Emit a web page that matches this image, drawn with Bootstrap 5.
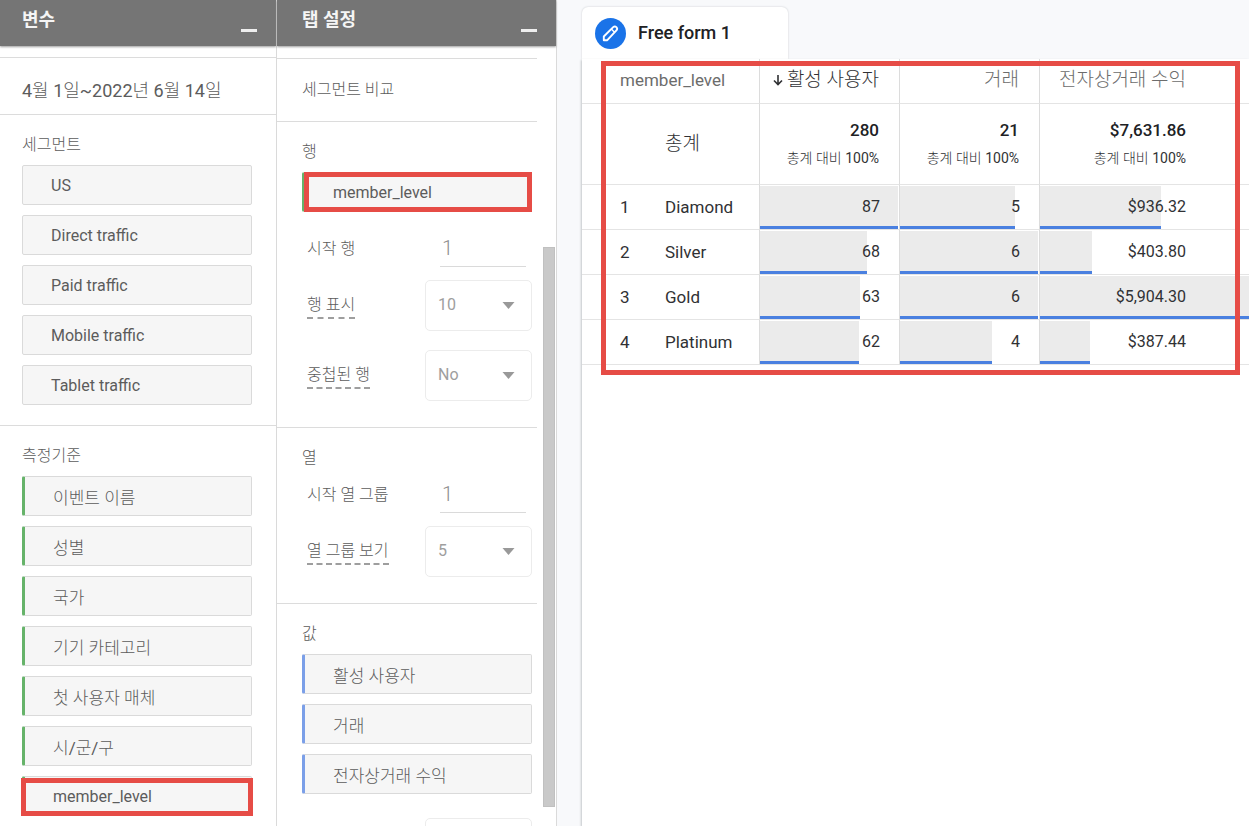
<!DOCTYPE html>
<html lang="ko">
<head>
<meta charset="utf-8">
<meta name="viewport" content="width=device-width, initial-scale=1">
<title>Free form 1</title>
<link href="https://cdn.jsdelivr.net/npm/bootstrap@5.3.0/dist/css/bootstrap.min.css" rel="stylesheet">
<style>
  body { font-family: Roboto, "Noto Sans CJK KR Light", "Noto Sans CJK KR", sans-serif; font-size: 16px; line-height: 20px; color: #5c5c5c; background: #f8f9fb; }
  .side { width: 277px; border-right: 1px solid #dadada; }
  .side-tabs { width: 280px; }
  .side-head { height: 46px; padding: 10px 19px 0 22px; background: #757575; color: #f5f5f5; box-shadow: 0 1px 2px #9e9e9e; }
  .side-head h2 { font-family: Roboto, "Noto Sans CJK KR", sans-serif; font-size: 18px; font-weight: 700; line-height: 20px; }
  .side-tabs .side-head { padding-left: 25px; }
  .collapse-btn { width: 16px; height: 3px; margin-top: 19px; background: #eee; }
  .date-row { height: 58px; margin-top: 11px; padding: 10px 0 0 22px; border: solid #dcdcdc; border-width: 1px 0; font-size: 18px; }
  .group { padding: 20px 24px 20px 22px; }
  .group + .group { border-top: 1px solid #dcdcdc; }
  .group-title { font-size: 16px; font-weight: 400; line-height: 20px; margin-bottom: 10px; }
  .group-tight .group-title { margin-bottom: 8px; }
  .chips { display: grid; gap: 10px; }
  .chip { position: relative; height: 40px; padding: 2px 28px 0; border: 1px solid #dadada; border-radius: 2px; background: #f6f6f6; color: #5c5c5c; text-align: left; }
  .ko { font-size: 17px; padding-top: 4px; }
  .chip-dim { border-left: 3px solid #66b36a; }
  .chip-metric { border-left: 3px solid #7b9fe8; }
  .marked::after, .table-mark { content: ""; position: absolute; border: 5px solid #e64c46; pointer-events: none; }
  .marked::after { inset: 1px -2px -1px -4px; }
  .side-tabs .marked { margin-bottom: 18px; }
  .side-tabs .marked::after { inset: -1px -1px -1px -1px; }
  .tab-body { width: 260px; }
  .tab-body .group { padding: 20px 5px 26px 25px; }
  .compare { height: 64px; margin-top: 12px; padding-left: 25px; border: solid #dcdcdc; border-width: 1px 0; }
  .field { padding-left: 5px; }
  .field + .field + .field { margin-top: 19px; }
  .start-field { height: 37px; margin-bottom: 13px; }
  .start-input { width: 86px; margin-right: 6px; padding: 0 2px; border: 0; border-bottom: 1px solid #dadada; border-radius: 0; font-size: 20px; font-weight: 300; color: #8e8e8e; background: transparent; }
  .hint { border-bottom: 2px dashed #9e9e9e; line-height: 24px; }
  .pick { width: 107px; height: 51px; padding: 0 12px 2px; border: 1px solid #ececec; border-radius: 5px; color: #9e9e9e; font-size: 16px; background-color: #fff;
    background-image: url("data:image/svg+xml,%3Csvg xmlns='http://www.w3.org/2000/svg' viewBox='0 0 12 7'%3E%3Cpath d='M0 0h12L6 7z' fill='%23999'/%3E%3C/svg%3E"); background-size: 13px 7px; background-position: right 16px center; }
  .thumb { width: 12px; height: 560px; margin: 201px 0 0 6px; background: #c9c9c9; border: 1px solid #c0c0c0; }
  .report { margin-left: 25px; padding-top: 7px; min-width: 0; }
  .report-tab { width: 206px; height: 52px; padding-left: 13px; gap: 12px; background: #fff; border-radius: 6px 6px 0 0; box-shadow: 0 0 2px #c4c7ca; color: #202124; font-size: 18px; font-weight: 500; }
  .sheet { background: #fff; box-shadow: -1px 1px 2px #c4c7ca; }
  .grid-table { width: 1223px; table-layout: fixed; border-collapse: separate; border-spacing: 0; font-size: 17px; color: #303134; }
  .grid-table th, .grid-table td { padding: 0; border-bottom: 1px solid #e4e4e4; vertical-align: middle; font-weight: 400; }
  .grid-table .edge { border-right: 1px solid #dcdcdc; }
  .grid-table thead th { height: 45px; color: #6c6c6c; padding-bottom: 2px; }
  .grid-table thead .sorted { color: #303134; }
  .grid-table .lead-cell { padding-left: 38px; }
  .grid-table .head-ko { font-size: 19px; }
  .grid-table .num { padding-right: 20px; text-align: right; }
  .bar-cell .num { padding-right: 19px; }
  .bar-cell { font-size: 16px; }
  .money { width: 146px; text-align: right; }
  .total-row td, .total-row th { height: 81px; }
  .total-num { font-weight: 500; line-height: 28px; color: #202124; }
  .total-sub { font-size: 14px; line-height: 28px; }
  .bar-cell { display: grid; height: 44px; align-items: center; }
  .bar-cell > * { grid-area: 1 / 1; }
  .bar { height: 43px; align-self: end; background: #ebebeb; border-bottom: 3px solid #4a80e0; }
  .table-mark { inset: 2px 9px -10px 19px; }
</style>
</head>
<body>
<div class="d-flex vh-100 overflow-hidden">

  <aside class="side bg-white flex-shrink-0">
    <header class="side-head d-flex justify-content-between">
      <h2 class="m-0">변수</h2>
      <button type="button" class="collapse-btn border-0 p-0" aria-label="접기"></button>
    </header>
    <div class="date-row d-flex align-items-center">4월 1일~2022년 6월 14일</div>
    <section class="group">
      <h3 class="group-title">세그먼트</h3>
      <div class="chips">
        <button type="button" class="chip">US</button>
        <button type="button" class="chip">Direct traffic</button>
        <button type="button" class="chip">Paid traffic</button>
        <button type="button" class="chip">Mobile traffic</button>
        <button type="button" class="chip">Tablet traffic</button>
      </div>
    </section>
    <section class="group">
      <h3 class="group-title">측정기준</h3>
      <div class="chips">
        <button type="button" class="chip chip-dim ko">이벤트 이름</button>
        <button type="button" class="chip chip-dim ko">성별</button>
        <button type="button" class="chip chip-dim ko">국가</button>
        <button type="button" class="chip chip-dim ko">기기 카테고리</button>
        <button type="button" class="chip chip-dim ko">첫 사용자 매체</button>
        <button type="button" class="chip chip-dim ko">시/군/구</button>
        <button type="button" class="chip chip-dim marked">member_level</button>
      </div>
    </section>
  </aside>

  <aside class="side side-tabs bg-white flex-shrink-0">
    <header class="side-head d-flex justify-content-between">
      <h2 class="m-0">탭 설정</h2>
      <button type="button" class="collapse-btn border-0 p-0" aria-label="접기"></button>
    </header>
    <div class="d-flex">
      <div class="tab-body flex-shrink-0">
        <div class="compare d-flex align-items-center">세그먼트 비교</div>
        <section class="group">
          <h3 class="group-title">행</h3>
          <button type="button" class="chip chip-dim marked d-block w-100">member_level</button>
          <div class="field start-field d-flex justify-content-between align-items-center">
            <label for="rowStart">시작 행</label>
            <input id="rowStart" class="start-input h-100" type="text" value="1">
          </div>
          <div class="field d-flex justify-content-between align-items-center">
            <label class="hint" for="rowCount">행 표시</label>
            <select id="rowCount" class="form-select pick"><option>10</option></select>
          </div>
          <div class="field d-flex justify-content-between align-items-center">
            <label class="hint" for="nested">중첩된 행</label>
            <select id="nested" class="form-select pick"><option>No</option></select>
          </div>
        </section>
        <section class="group group-tight">
          <h3 class="group-title">열</h3>
          <div class="field start-field d-flex justify-content-between align-items-center">
            <label for="colStart">시작 열 그룹</label>
            <input id="colStart" class="start-input h-100" type="text" value="1">
          </div>
          <div class="field d-flex justify-content-between align-items-center">
            <label class="hint" for="colCount">열 그룹 보기</label>
            <select id="colCount" class="form-select pick"><option>5</option></select>
          </div>
        </section>
        <section class="group">
          <h3 class="group-title">값</h3>
          <div class="chips mb-4">
            <button type="button" class="chip chip-metric ko">활성 사용자</button>
            <button type="button" class="chip chip-metric ko">거래</button>
            <button type="button" class="chip chip-metric ko">전자상거래 수익</button>
          </div>
          <div class="d-flex justify-content-end">
            <select class="form-select pick" aria-label="셀 유형"><option></option></select>
          </div>
        </section>
      </div>
      <div class="thumb flex-shrink-0"></div>
    </div>
  </aside>

  <main class="report d-flex flex-column flex-grow-1">
    <div class="report-tab d-flex align-items-center">
      <svg width="31" height="31" viewBox="0 0 31 31" aria-hidden="true">
        <circle cx="15.500" cy="15.500" r="15.500" fill="#1a73e8"/>
        <path d="M8.800 22.200v-3.700L18.200 9.100q1.600-1.400 3.200 0 1.500 1.600 0 3.200L12.300 22.200z" fill="none" stroke="#fff" stroke-width="1.900" stroke-linejoin="round"/>
        <path d="M16.800 10.500l3.500 3.500-1 1-3.500-3.500z" fill="#fff"/>
      </svg>
      <span>Free form 1</span>
    </div>
    <div class="sheet position-relative flex-grow-1">
      <div class="position-relative">
        <div class="overflow-hidden">
          <table class="grid-table">
            <colgroup><col style="width:83px"><col style="width:95px"><col style="width:140px"><col style="width:140px"><col></colgroup>
            <thead>
              <tr>
                <th colspan="2" class="lead-cell edge" scope="col">member_level</th>
                <th class="edge num sorted head-ko" scope="col"><div class="d-flex justify-content-end align-items-center gap-1"><svg width="10" height="12" viewBox="0 0 10 12" aria-hidden="true"><path d="M5 1v9.500M1 6.500l4 4 4-4" fill="none" stroke="#303134" stroke-width="1.600"/></svg><span>활성 사용자</span></div></th>
                <th class="edge num head-ko" scope="col">거래</th>
                <th class="head-ko" scope="col"><div class="money">전자상거래 수익</div></th>
              </tr>
            </thead>
            <tbody>
              <tr class="total-row">
                <td></td>
                <th class="edge head-ko" scope="row">총계</th>
                <td class="edge num"><div class="total-num">280</div><div class="total-sub">총계 대비 100%</div></td>
                <td class="edge num"><div class="total-num">21</div><div class="total-sub">총계 대비 100%</div></td>
                <td><div class="money"><div class="total-num">$7,631.86</div><div class="total-sub">총계 대비 100%</div></div></td>
              </tr>
              <tr>
                <td class="lead-cell">1</td><th class="edge" scope="row">Diamond</th>
                <td class="edge"><div class="bar-cell"><div class="bar" style="width:99%"></div><div class="num">87</div></div></td>
                <td class="edge"><div class="bar-cell"><div class="bar" style="width:83%"></div><div class="num">5</div></div></td>
                <td><div class="bar-cell"><div class="bar" style="width:15.86%"></div><div class="money">$936.32</div></div></td>
              </tr>
              <tr>
                <td class="lead-cell">2</td><th class="edge" scope="row">Silver</th>
                <td class="edge"><div class="bar-cell"><div class="bar" style="width:77%"></div><div class="num">68</div></div></td>
                <td class="edge"><div class="bar-cell"><div class="bar" style="width:99%"></div><div class="num">6</div></div></td>
                <td><div class="bar-cell"><div class="bar" style="width:6.84%"></div><div class="money">$403.80</div></div></td>
              </tr>
              <tr>
                <td class="lead-cell">3</td><th class="edge" scope="row">Gold</th>
                <td class="edge"><div class="bar-cell"><div class="bar" style="width:72%"></div><div class="num">63</div></div></td>
                <td class="edge"><div class="bar-cell"><div class="bar" style="width:99%"></div><div class="num">6</div></div></td>
                <td><div class="bar-cell"><div class="bar" style="width:100%"></div><div class="money">$5,904.30</div></div></td>
              </tr>
              <tr>
                <td class="lead-cell">4</td><th class="edge" scope="row">Platinum</th>
                <td class="edge"><div class="bar-cell"><div class="bar" style="width:71%"></div><div class="num">62</div></div></td>
                <td class="edge"><div class="bar-cell"><div class="bar" style="width:66%"></div><div class="num">4</div></div></td>
                <td><div class="bar-cell"><div class="bar" style="width:6.56%"></div><div class="money">$387.44</div></div></td>
              </tr>
            </tbody>
          </table>
        </div>
        <div class="table-mark"></div>
      </div>
    </div>
  </main>
</div>
<script src="https://cdn.jsdelivr.net/npm/bootstrap@5.3.0/dist/js/bootstrap.bundle.min.js"></script>
</body>
</html>
